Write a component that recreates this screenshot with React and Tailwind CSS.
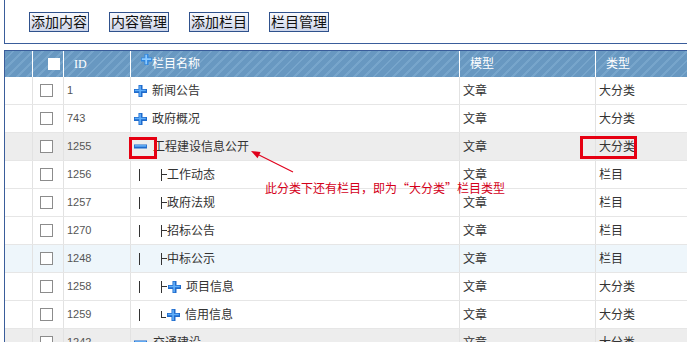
const rows = [
    { id: '1', icon: 'plus', name: '新闻公告', type: '大分类' },
    { id: '743', icon: 'plus', name: '政府概况', type: '大分类' },
    { id: '1255', icon: 'minus', name: '工程建设信息公开', type: '大分类', bg: 'bg-[#ededed]' },
    { id: '1256', tree: 'mid', name: '工作动态', type: '栏目' },
    { id: '1257', tree: 'mid', name: '政府法规', type: '栏目' },
    { id: '1270', tree: 'mid', name: '招标公告', type: '栏目' },
    { id: '1248', tree: 'mid', name: '中标公示', type: '栏目', bg: 'bg-[#eef6fb]' },
    { id: '1258', tree: 'mid', icon: 'plus', name: '项目信息', type: '大分类' },
    { id: '1259', tree: 'last', icon: 'plus', name: '信用信息', type: '大分类' },
    { id: '1242', icon: 'minus', name: '交通建设', type: '大分类', bg: 'bg-[#ededed]' },
];

const buttons = ['添加内容', '内容管理', '添加栏目', '栏目管理'];

const cols = 'grid grid-cols-[28px_31px_67px_329px_136px_1fr]';

function PlusIcon({ small = false, className = '' }) {
    if (small) {
        return (
            <svg width="11" height="11" viewBox="0 0 11 11" className={className}>
                <path d="M3.5 0h4v3.5h3.5v4h-3.5v3.5h-4v-3.5h-3.5v-4h3.5z" fill="#2f86e0" />
                <path d="M4.3 0.8h1.8v3.5h4.1v1.6h-4.1v4.3h-1.8v-4.3h-3.5v-1.6h3.5z" fill="#8ccaff" />
            </svg>
        );
    }
    return (
        <svg width="13" height="12" viewBox="0 0 13 12" className={className}>
            <path d="M4.5 0h4v4h4.5v4h-4.5v4h-4v-4h-4.5v-4h4.5z" fill="#1f6bcc" />
            <path d="M5.3 0.8h1.6v4h4.9v1.5h-4.9v4.9h-1.6v-4.9h-4.5v-1.5h4.5z" fill="#62b0fa" />
        </svg>
    );
}

function MinusIcon() {
    return (
        <svg width="13" height="5" viewBox="0 0 13 5">
            <rect x="0" y="0.5" width="13" height="4" fill="#1f6bcc" />
            <rect x="0.8" y="1.2" width="11.4" height="1.4" fill="#6fb8fc" />
        </svg>
    );
}

function Branch({ last }) {
    if (last) {
        return (
            <span className="h-[12px] w-[6px]">
                <span className="block h-[7px] w-[5px] border-b border-l border-[#333]" />
            </span>
        );
    }
    return (
        <span className="flex h-[12px] w-[6px] items-center border-l border-[#333]">
            <span className="h-px w-[5px] bg-[#333]" />
        </span>
    );
}

export default function App() {
    return (
        <div className="relative h-[342px] w-[687px] overflow-hidden bg-white font-['Liberation_Sans','Noto_Sans_CJK_SC',sans-serif]">
            <div className="w-[760px] pl-[4px]">
                <div className="flex h-[44px] gap-[20px] border-b border-l border-[#3a5d9b] pl-[24px] pt-[12px]">
                    {buttons.map((b) => (
                        <button
                            key={b}
                            type="button"
                            className="flex h-[20px] w-[60px] items-center justify-center border border-[#2f518c] bg-gradient-to-b from-[#f7f8fc] to-[#cdd5ea] text-[14px] font-normal leading-none text-[#111]"
                        >
                            {b}
                        </button>
                    ))}
                </div>

                <div className="mt-[6px] border-l border-t border-[#3a5d9b]">
                    <div className={`${cols} h-[26px] bg-[repeating-linear-gradient(135deg,#6898c1_0px,#6898c1_5px,#77a5cb_5px,#77a5cb_7px)] text-[12px] text-white`}>
                        <div className="border-r border-white" />
                        <div className="flex items-center border-r border-white pl-[15px]">
                            <span className="h-[12px] w-[12px] bg-white" />
                        </div>
                        <div className="flex items-center border-r border-white pl-[10px] font-['Liberation_Serif',serif]">ID</div>
                        <div className="flex items-center border-r border-white pl-[10px]">
                            <PlusIcon small className="mb-[9px]" />
                            <span>栏目名称</span>
                        </div>
                        <div className="flex items-center border-r border-white pl-[10px]">模型</div>
                        <div className="flex items-center pl-[10px]">类型</div>
                    </div>

                    {rows.map((r) => (
                        <div key={r.id} className={`${cols} h-[28px] border-b border-[#e6e6e6] text-[12px] text-[#333] ${r.bg ?? 'bg-white'}`}>
                            <div className="border-r border-[#e2e2e2]" />
                            <div className="flex items-center border-r border-[#e2e2e2] pl-[7px]">
                                <span className="h-[13px] w-[13px] border border-[#8c8c8c] bg-white" />
                            </div>
                            <div className="flex items-center border-r border-[#e2e2e2] pl-[3px] text-[11px] text-[#555]">{r.id}</div>
                            <div className="flex items-center border-r border-[#e2e2e2] pl-[3px]">
                                {r.tree && (
                                    <>
                                        <span className="ml-[5px] h-[12px] w-px bg-[#333]" />
                                        <span className="ml-[21px]">
                                            <Branch last={r.tree === 'last'} />
                                        </span>
                                    </>
                                )}
                                {r.icon === 'plus' && <PlusIcon className={r.tree ? 'ml-px' : ''} />}
                                {r.icon === 'minus' && <MinusIcon />}
                                <span className={r.icon ? (r.icon === 'minus' ? 'ml-[6px]' : 'ml-[5px]') : ''}>{r.name}</span>
                            </div>
                            <div className="flex items-center border-r border-[#e2e2e2] pl-[3px]">文章</div>
                            <div className="flex items-center pl-[3px]">{r.type}</div>
                        </div>
                    ))}
                </div>
            </div>

            {/* annotation overlays */}
            <div className="absolute left-[129px] top-[137px] h-[22px] w-[28px] border-[3px] border-[#e60012]" />
            <div className="absolute left-[580px] top-[136px] h-[23px] w-[57px] border-[3px] border-[#e60012]" />
            <svg className="absolute left-0 top-0" width="687" height="342">
                <line x1="293" y1="172" x2="258" y2="154.5" stroke="#e0001b" strokeWidth="1.2" />
                <polygon points="251,151 260.6,151.9 257.5,158.2" fill="#e0001b" />
            </svg>
            <div lang="zh-CN" className="absolute left-[265px] top-[181px] font-['Noto_Sans_CJK_SC',sans-serif] text-[12px] leading-[14px] text-[#d4001a]">
                此分类下还有栏目，即为“大分类”栏目类型
            </div>
        </div>
    );
}
